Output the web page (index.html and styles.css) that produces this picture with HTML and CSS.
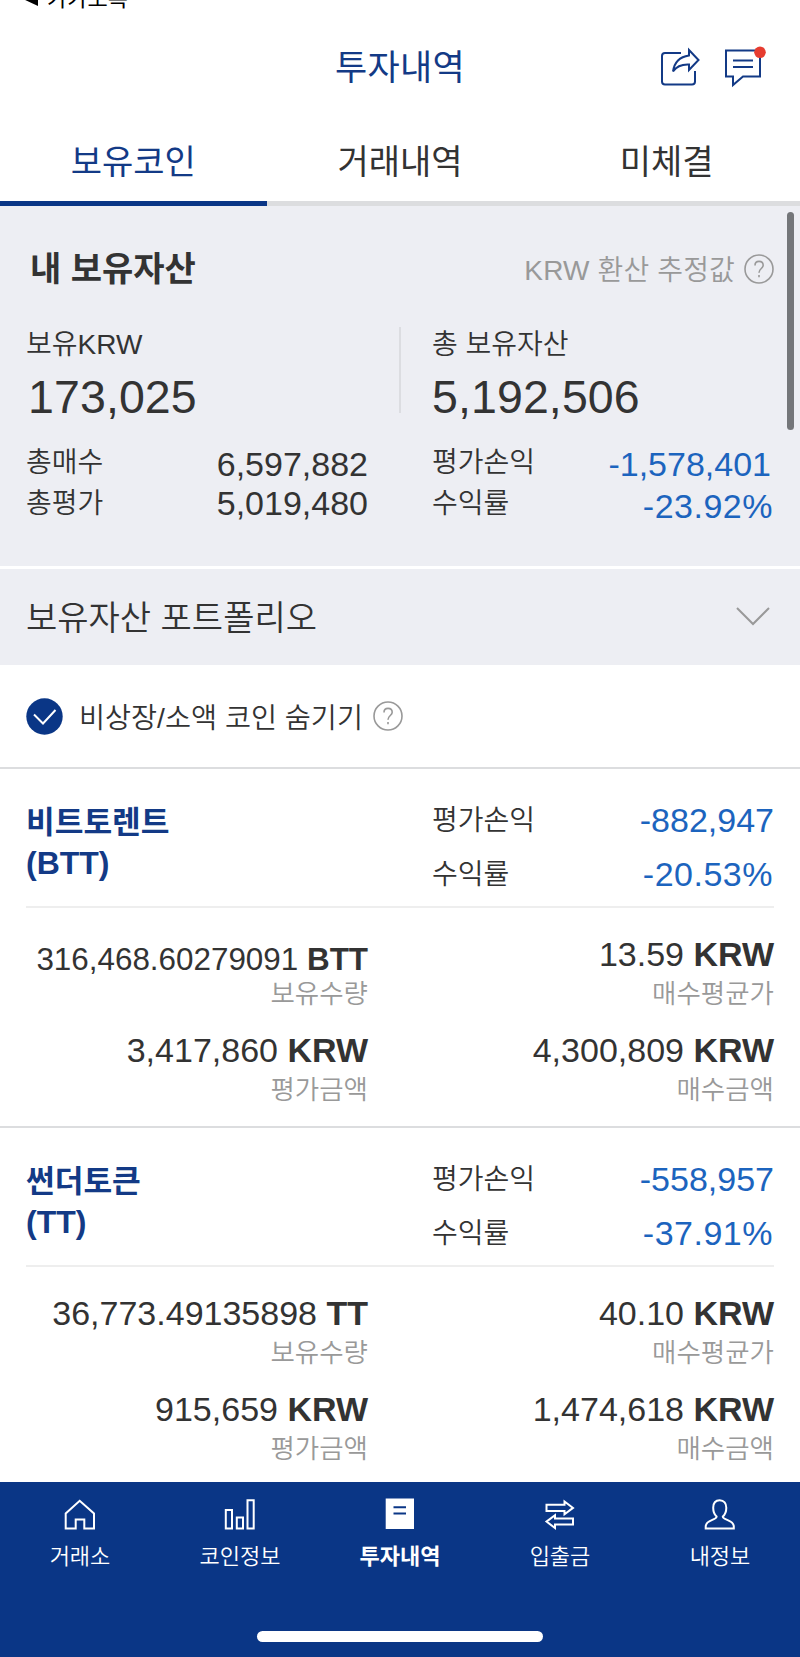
FILE: index.html
```html
<!DOCTYPE html>
<html lang="ko">
<head>
<meta charset="utf-8">
<title>투자내역</title>
<link rel="stylesheet" href="styles.css">
</head>
<body>
<div class="app">
  <div class="status"><svg class="back" width="16" height="16" viewBox="0 0 16 16"><path d="M0 8L15 1V15Z"/></svg><span>카카오톡</span></div>
  <header class="header">
    <h1 class="title">투자내역</h1>
    <div class="actions">
      <svg width="40" height="40" viewBox="660 46 40 40"><path d="M681 53H665Q662 53 662 56V81.500Q662 84.500 665 84.500H692Q695 84.500 695 81.500V71M689 50L698.500 60L689 70V64.500Q678 64 673 71.500Q675 57.500 689 55.500Z"/></svg>
      <svg width="44" height="44" viewBox="724 44 44 44"><path d="M726 50.500H760V76.500H743L733 85V76.500H726ZM733 60.500H753M733 67H753"/><circle class="dot" cx="760" cy="52.300" r="5.800"/></svg>
    </div>
  </header>
  <nav class="tabs"><a class="tab active">보유코인</a><a class="tab">거래내역</a><a class="tab">미체결</a></nav>

  <main class="content">
    <div class="scrollbar"></div>
    <section class="summary">
      <div class="summary-head">
        <h2>내 보유자산</h2>
        <div class="estimate"><span>KRW 환산 추정값</span><svg class="help" width="30" height="30" viewBox="0 0 30 30"><circle cx="15" cy="15" r="14"/><path d="M11 11.500C11 8.700 12.600 7.400 15 7.400S19.200 8.900 19.200 11.300C19.200 14.500 15 14.600 15 18.700M15 21V23.200"/></svg></div>
      </div>
      <div class="cols">
        <div class="asset"><p class="label">보유KRW</p><p class="big first">173,025</p></div>
        <div class="asset total"><p class="label">총 보유자산</p><p class="big">5,192,506</p></div>
      </div>
      <div class="cols figures">
        <dl><dt>총매수</dt><dd>6,597,882</dd><dt>총평가</dt><dd>5,019,480</dd></dl>
        <dl class="loss"><dt>평가손익</dt><dd>-1,578,401</dd><dt>수익률</dt><dd class="rate">-23.92%</dd></dl>
      </div>
    </section>
    <section class="portfolio">
      <span>보유자산 포트폴리오</span>
      <svg width="36" height="20" viewBox="0 0 36 20"><path d="M2 2L18 18L34 2"/></svg>
    </section>
    <div class="filter">
      <svg width="37" height="37" viewBox="0 0 37 37"><circle class="check-bg" cx="18.500" cy="18.500" r="18.200"/><path class="check" d="M8 16.500L17 25.500L29.500 12"/></svg>
      <span>비상장/소액 코인 숨기기</span>
      <svg class="help" width="30" height="30" viewBox="0 0 30 30"><circle cx="15" cy="15" r="14"/><path d="M11 11.500C11 8.700 12.600 7.400 15 7.400S19.200 8.900 19.200 11.300C19.200 14.500 15 14.600 15 18.700M15 21V23.200"/></svg>
    </div>

    <article class="coin">
      <div class="cols coin-head">
        <h3>비트토렌트<br><span class="ticker">(BTT)</span></h3>
        <dl class="loss"><dt>평가손익</dt><dd>-882,947</dd><dt>수익률</dt><dd class="rate">-20.53%</dd></dl>
      </div>
      <div class="cols holdings">
        <div class="cell"><p class="amount long">316,468.60279091 <b>BTT</b></p><p class="caption">보유수량</p></div>
        <div class="cell"><p class="amount">13.59 <b>KRW</b></p><p class="caption">매수평균가</p></div>
        <div class="cell"><p class="amount">3,417,860 <b>KRW</b></p><p class="caption">평가금액</p></div>
        <div class="cell"><p class="amount">4,300,809 <b>KRW</b></p><p class="caption">매수금액</p></div>
      </div>
    </article>
    <article class="coin">
      <div class="cols coin-head">
        <h3>썬더토큰<br><span class="ticker">(TT)</span></h3>
        <dl class="loss"><dt>평가손익</dt><dd>-558,957</dd><dt>수익률</dt><dd class="rate">-37.91%</dd></dl>
      </div>
      <div class="cols holdings">
        <div class="cell"><p class="amount">36,773.49135898 <b>TT</b></p><p class="caption">보유수량</p></div>
        <div class="cell"><p class="amount">40.10 <b>KRW</b></p><p class="caption">매수평균가</p></div>
        <div class="cell"><p class="amount">915,659 <b>KRW</b></p><p class="caption">평가금액</p></div>
        <div class="cell"><p class="amount">1,474,618 <b>KRW</b></p><p class="caption">매수금액</p></div>
      </div>
    </article>
  </main>

  <footer class="bottom">
    <nav class="menu">
      <a><svg width="32" height="32" viewBox="0 0 32 32"><path d="M1.700 30.500V15.500L15.700 2.800L30 15.500V30.500H20.300V21.500H11.700V30.500Z"/></svg>거래소</a>
      <a><svg width="32" height="32" viewBox="0 0 32 32"><path d="M1.800 12H8V30.500H1.800ZM12.800 19.500H19V30.500H12.800ZM23.500 2.300H29.700V30.500H23.500Z"/></svg>코인정보</a>
      <a class="current"><svg width="32" height="32" viewBox="0 0 32 32"><path class="sheet" d="M1.700 .5H30V31H1.700Z"/><path class="rule" d="M9.500 9.200H22M9.500 15.500H22"/></svg>투자내역</a>
      <a><svg width="32" height="32" viewBox="0 0 32 32"><path d="M2.500 6.700H20.500V3.500L29 9.900L20.500 16.200V13H2.500ZM29 20.500H11V17.300L2.500 23.600L11 30V26.600H29Z"/></svg>입출금</a>
      <a><svg width="32" height="32" viewBox="0 0 32 32"><path d="M15.700 2.200C11.400 2.200 9.200 5.400 9.200 9.800C9.200 13.700 10.500 16.800 12.600 18.500C12.600 22.500 1.700 21.500 1.700 28.500V30.500H29.800V28.500C29.800 21.500 18.800 22.500 18.800 18.500C21 16.800 22.300 13.700 22.300 9.800C22.300 5.400 20 2.200 15.700 2.200Z"/></svg>내정보</a>
    </nav>
    <div class="home-bar"></div>
  </footer>
</div>
</body>
</html>
```

FILE: styles.css
```css
* { box-sizing: border-box; margin: 0; padding: 0; }
body {
  background: #fff;
  color: #333;
  font-family: "Liberation Sans", "Noto Sans CJK KR", sans-serif;
  font-weight: 400;
}
svg { display: block; flex: none; fill: none; stroke-width: 2; }
h1, h2, h3 { font-weight: inherit; }
.app { display: flex; flex-direction: column; width: 800px; height: 1657px; overflow: hidden; }

.status {
  display: flex; align-items: flex-end; gap: 8px;
  flex: none; height: 12px; padding-left: 23px; overflow: hidden;
  color: #000; font-size: 22px; line-height: 26px;
}
.back { fill: #000; margin-bottom: 5px; }

.header {
  display: grid; grid-template-columns: 1fr auto 1fr; align-items: center;
  flex: none; height: 108px; padding: 0 32px; color: #133a86;
}
.title { grid-column: 2; padding-top: 3px; font-size: 35px; line-height: 44px; letter-spacing: .3px; }
.actions { display: flex; align-items: center; justify-content: flex-end; gap: 24px; stroke: #133a86; }
.dot { fill: #e63c30; stroke: none; }

.tabs { display: grid; grid-template-columns: repeat(3, 1fr); flex: none; height: 86px; }
.tab {
  display: flex; align-items: center; justify-content: center;
  padding-bottom: 3px; border-bottom: 5px solid #dcdddf; font-size: 34px;
}
.active { color: #133a86; border-color: #0a3686; }

.content { position: relative; flex: 1; min-height: 0; overflow: hidden; }
.scrollbar {
  position: absolute; top: 6px; right: 6px; width: 7px; height: 218px;
  border-radius: 4px; background: #747679;
}
.cols { display: grid; grid-template-columns: 342px 342px; column-gap: 64px; }

.summary { height: 360px; padding: 38px 26px 0; background: #edeef3; }
.summary-head { display: flex; justify-content: space-between; align-items: center; height: 50px; padding-left: 4px; }
.summary-head h2 { font-size: 34px; line-height: 50px; font-weight: 700; }
.estimate { display: flex; align-items: center; gap: 9px; color: #999; font-size: 28px; font-weight: 350; letter-spacing: .15px; }
.estimate span { padding-bottom: 3px; }
.help { stroke: #999; stroke-width: 1.600; }
.asset { padding-top: 34px; height: 127px; }
.total { position: relative; }
.total::before {
  content: ""; position: absolute; left: -33px; top: 33px;
  width: 2px; height: 86px; background: #dcdde1;
}
.label { font-size: 28px; line-height: 34px; font-weight: 350; }
.big { font-size: 46.500px; line-height: 70px; letter-spacing: .1px; }
.first { padding-left: 2px; }
dl { display: grid; grid-template-columns: auto 1fr; align-content: start; font-size: 34px; }
dt { font-size: 28px; font-weight: 350; }
dd { text-align: right; }
.loss dd { color: #1c64be; }
.loss .rate { padding-right: 1px; letter-spacing: .5px; }
.figures { padding-top: 20px; }
.figures dl { grid-auto-rows: 41px; line-height: 41px; }
.figures dt { padding-top: 1px; }
.figures dd { padding-top: 1px; }
.figures dd:first-of-type { padding-top: 3px; }
.figures .loss dd:first-of-type { padding-right: 3px; }
.figures .rate { padding-top: 4px; }

.portfolio {
  display: flex; align-items: center; justify-content: space-between;
  height: 99px; padding: 0 29px 2px 26px; border-top: 3px solid #fff;
  background: #edeef3; font-size: 34px; stroke: #999;
}
.portfolio span { padding-bottom: 2px; font-weight: 350; }
.filter {
  display: flex; align-items: center; height: 104px; padding-left: 26px;
  border-bottom: 2px solid #dcdddf; font-size: 28.300px; font-weight: 350;
}
.filter span { margin: 0 10px 2px 16px; }
.check-bg { fill: #0a3686; }
.check { stroke: #fff; }

.coin { height: 359px; padding: 0 26px; border-bottom: 2px solid #dcdddf; }
.coin-head { height: 139px; padding-top: 32px; border-bottom: 2px solid #eee; }
.coin h3 { padding-top: 1px; color: #133a86; font-size: 31.200px; line-height: 41px; font-weight: 700; }
.ticker { font-size: 32px; }
.coin-head dl { grid-auto-rows: 54px; line-height: 36px; }
.coin-head dt { padding-top: 2px; }
.coin-head dd { padding-top: 1px; }
.holdings { padding-top: 27px; grid-auto-rows: 96px; text-align: right; }
.amount { height: 41px; font-size: 34px; line-height: 39px; }
.amount b { font-weight: 700; }
.long { padding-top: 5px; font-size: 31.400px; }
.caption { color: #999; font-size: 26.500px; line-height: 36px; font-weight: 350; }

.bottom { flex: none; height: 175px; padding-top: 16px; background: #0a3686; }
.menu { display: grid; grid-template-columns: repeat(5, 1fr); height: 133px; }
.menu a {
  display: flex; flex-direction: column; align-items: center; gap: 13px;
  color: #fff; stroke: #fff; font-size: 22px; line-height: 28px; font-weight: 350;
}
.menu .current { font-weight: 700; }
.sheet { fill: #fff; stroke: none; }
.rule { stroke: #0a3686; }
.home-bar { width: 286px; height: 11px; margin: 0 auto; border-radius: 6px; background: #fff; }
```
